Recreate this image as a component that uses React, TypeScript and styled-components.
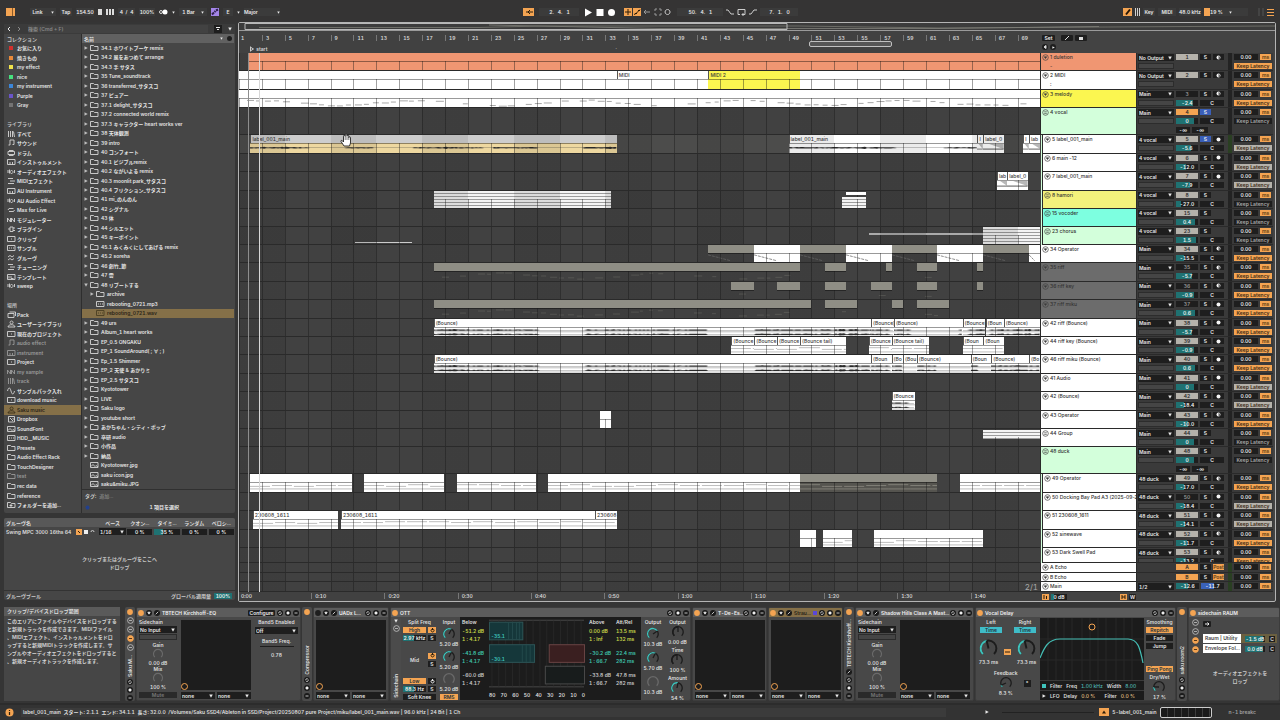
import React from "react";
import styled, { createGlobalStyle, css } from "styled-components";

const SPAN = 69.96;
const bar = (n: number) => (n * 100) / SPAN;

const ORANGE = "#f4a452";
const TEAL = "#1f7272";

const Global = createGlobalStyle`
  *, *::before, *::after { box-sizing: border-box; }
  html, body { margin: 0; padding: 0; background: #343434; }
  body, button, input, select {
    font-family: Inter, "Noto Sans CJK JP", sans-serif;
    font-size: 5px;
    font-weight: 600;
    line-height: 6px;
    font-variant-numeric: tabular-nums;
    color: #dedede;
  }
  button, input, select { margin: 0; padding: 0; border: 0; border-radius: 0; background: none; min-width: 0; outline: none; }
  input { text-align: center; width: 100%; }
  ul { list-style: none; margin: 0; padding: 0; }
  svg { display: block; flex: none; }
`;

const Shell = styled.div`
  height: 100vh;
  display: flex;
  flex-direction: column;
  overflow: hidden;
  background: #353535;
  white-space: nowrap;
`;

/* ---------- shared ---------- */

const Tri = ({ dir = "down", size = 4, color = "#e8e8e8" }: { dir?: "down" | "right"; size?: number; color?: string }) => (
  <svg width={size} height={size} viewBox="0 0 8 8" fill={color}>
    <path d={dir === "down" ? "M0.5 1h7L4 7.5z" : "M1 0.5v7L7.5 4z"} />
  </svg>
);

const PickWrap = styled.label<{ $w?: number }>`
  display: flex;
  align-items: center;
  height: 7px;
  width: ${(p) => (p.$w ? p.$w + "px" : "100%")};
  padding: 0 2px 0 1px;
  background: #1e1e1e;
  select { flex: 1; height: 7px; appearance: none; color: #e6e6e6; }
`;

const Pick = ({ value, label, w }: { value: string; label: string; w?: number }) => (
  <PickWrap $w={w}>
    <select aria-label={label} defaultValue={value}>
      <option>{value}</option>
    </select>
    <Tri />
  </PickWrap>
);

const Spacer = styled.div`
  flex: 1;
`;
const Narrow = styled.div<{ $w: number }>`
  flex: none;
  width: ${(p) => p.$w}px;
`;

/* ---------- top bar ---------- */

const TopBar = styled.header`
  flex: none;
  height: 22px;
  display: flex;
  align-items: center;
  padding: 2px 6px 0 6px;
  background: #353434;
`;
const Stretch = styled.div<{ $n: number }>`
  flex: ${(p) => p.$n} 1 0;
`;
const Group = styled.div<{ $gap?: number }>`
  display: flex;
  align-items: center;
  gap: ${(p) => p.$gap ?? 4}px;
`;
const Cell = styled.div<{ $w?: number; $gap?: number }>`
  height: 8px;
  line-height: 8px;
  width: ${(p) => (p.$w ? p.$w + "px" : "auto")};
  display: flex;
  align-items: center;
  justify-content: center;
  gap: ${(p) => p.$gap ?? 6}px;
  background: #3b3b3b;
  color: #e8e8e8;
`;
const Chip = styled.button<{ $bg?: string; $w?: number; $h?: number }>`
  flex: none;
  height: ${(p) => p.$h ?? 8}px;
  width: ${(p) => p.$w ?? 9}px;
  display: flex;
  align-items: center;
  justify-content: center;
  background: ${(p) => p.$bg ?? "#3b3b3b"};
  color: #e8e8e8;
`;

const Stroke = ({ d, w = 8, h = 8, color = "#dcdcdc", fill = "none", sw = 1 }: { d: string; w?: number; h?: number; color?: string; fill?: string; sw?: number }) => (
  <svg width={w} height={h} viewBox={`0 0 ${w} ${h}`} fill={fill} stroke={color} strokeWidth={sw}>
    <path d={d} />
  </svg>
);

const Top = () => (
  <TopBar>
    <Group>
      <Chip $bg={ORANGE} aria-label="browser">
        <Stroke d="M5.500 0v8" color="#8a5a28" />
      </Chip>
      <Narrow $w={7} />
      <Cell $w={26} $gap={8}>
        Link
        <Tri size={3} />
      </Cell>
      <Chip $w={12}>Tap</Chip>
      <Cell $w={18}>154.50</Cell>
      <Stroke w={16} d="M1 1v6M3 1v6M9 1v6M12 1v6M15 1v6" sw={2} />
      <Cell $w={17}>4&nbsp; / &nbsp;4</Cell>
      <Cell $w={16}>100%</Cell>
      <svg width="9" height="6" viewBox="0 0 9 6">
        <circle cx="2" cy="3" r="1.500" fill="none" stroke="#ddd" />
        <circle cx="6" cy="3" r="2.500" fill="#fff" />
      </svg>
      <Tri size={3} />
      <Cell $w={28}>
        1 Bar <Tri size={3} />
      </Cell>
      <Chip $bg="#a385e8" $w={8} aria-label="scale">
        <Stroke d="M1 6.500l2-2M3.500 4l1-1M5 2.500l2-1" color="#30204f" sw={2} />
      </Chip>
      <Cell $w={10}>E</Cell>
      <Tri size={3} />
      <Cell $w={36}>
        Major <Spacer /> <Tri size={3} />
      </Cell>
    </Group>
    <Stretch $n={3} />
    <Group $gap={5}>
      <Chip $bg={ORANGE} $w={11} aria-label="follow">
        <Stroke w={8} d="M1 4h7M5 2L3 4l2 2" color="#2c1c08" />
      </Chip>
      <Cell $w={40}>2.&nbsp;&nbsp; 4.&nbsp;&nbsp; 1</Cell>
      <svg width="35" height="9" viewBox="3 0 35 9" fill="#fff">
        <path d="M4 0.500v8L11 4.500z" />
        <rect x="15.500" y="1" width="7" height="7" />
        <circle cx="30.500" cy="4.500" r="3.500" />
      </svg>
      <Group $gap={1}>
        <Chip $bg={ORANGE} $w={8} aria-label="overdub">
          <Stroke d="M4 1v6M1 4h6" color="#2c1c08" />
        </Chip>
        <Chip $bg={ORANGE} $w={8} aria-label="automation arm">
          <Stroke d="M1 6.500l2-1 3-3 1-1M2 5.500h2M5 2.500h2" color="#2c1c08" />
        </Chip>
        <Stroke w={10} d="M2 4h6M4 2L2 4l2 2" color="#999" />
        <Stroke w={9} d="M2 3V1h2M6 1h2v2M8 5v2H6M4 7H2V5" color="#999" />
        <Stroke w={9} d="M4.500 1.500a2.500 2.500 0 1 0 .1 0" color="#ccc" />
      </Group>
      <Group $gap={3}>
        <Cell $w={46}>50.&nbsp;&nbsp; 4.&nbsp;&nbsp; 1</Cell>
        <Stroke d="M0 2h2l3 4h3" color="#ccc" />
        <Stroke w={9} d="M3 6.500H1V1.500h7v5H5M6.500 5L5 6.500 6.500 8" color="#ccc" />
        <Stroke d="M0 6h2l3-4h3" color="#ccc" />
        <Cell $w={38}>7.&nbsp;&nbsp; 1.&nbsp;&nbsp; 0</Cell>
      </Group>
    </Group>
    <Stretch $n={4} />
    <Group $gap={3}>
      <Chip $bg={ORANGE} aria-label="draw mode">
        <Stroke d="M2 6.500l4-5" color="#241505" sw={2} />
      </Chip>
      <Stroke w={5} d="M.5 0v8M2.500 0v8M4.500 0v8" color="#d0d0d0" />
      <Cell $w={12}>Key</Cell>
      <Cell $w={18}>MIDI</Cell>
      <Cell $w={22}>48.0 kHz</Cell>
      <Group $gap={0}>
        <Chip as="span" $bg={ORANGE} $w={6} />
        <Cell $w={38}>
          19 % <Tri size={3} /> <Spacer />
        </Cell>
      </Group>
      <Narrow $w={4} />
      <Stroke w={6} d="M1 0v8M5 0v8" color="#555" />
      <Stroke w={7} d="M0 1.500h7M0 4.500h7M0 7.500h7" color={ORANGE} />
    </Group>
  </TopBar>
);

/* ---------- browser ---------- */

const Middle = styled.div`
  flex: 1;
  min-height: 0;
  display: flex;
  gap: 3px;
  padding-right: 4px;
`;
const LeftCol = styled.aside`
  flex: none;
  width: 235px;
  padding: 2px 0 2px 4px;
  display: flex;
  flex-direction: column;
  gap: 5px;
`;
const Panel = styled.section<{ $grow?: boolean }>`
  display: flex;
  flex-direction: column;
  min-height: 0;
  flex: ${(p) => (p.$grow ? "1" : "none")};
  background: #464646;
  border-radius: 2px;
  overflow: hidden;
`;
const SearchRow = styled.div`
  flex: none;
  height: 10px;
  display: flex;
  align-items: center;
  gap: 6px;
  padding: 0 3px 0 2px;
  background: #3b3b3b;
  input { flex: 1; height: 8px; text-align: left; background: #424242; }
  input::placeholder { color: #888; }
`;
const Split = styled.div`
  flex: 1;
  min-height: 0;
  display: flex;
`;
const Side = styled.ul`
  flex: none;
  width: 78px;
  padding-bottom: 3px;
  display: flex;
  flex-direction: column;
  border-right: 1px solid #2e2e2e;
`;
const SideItem = styled.li<{ $kind?: string }>`
  flex: 1;
  min-height: 0;
  display: flex;
  align-items: center;
  gap: 1px;
  padding-left: 3px;
  color: ${(p) => (p.$kind === "head" ? "#c4c4c4" : p.$kind === "dim" ? "#9a9a9a" : p.$kind === "sel" ? "#2a2416" : "#e4e4e4")};
  background: ${(p) => (p.$kind === "sel" ? "#857048" : "transparent")};
`;
const Swatch = styled.span<{ $c: string }>`
  width: 4px;
  height: 4px;
  margin: 0 3px 0 2px;
  background: ${(p) => p.$c};
`;

const G: Record<string, string> = {
  bars: "M1.500 1v6M3.500 1v6M5.500 1v6M6.500 1.500l1 5.500",
  note: "M3 6V1h4v4.500M1.500 6h1.500M5.500 5.500H7",
  drum: "M1 2.500h6.500v3H1zM2 1.500h4.500M2 6.500h4.500",
  keys: "M.5 1.500h7.500v5H.5zM3 4v2.500M5.500 4v2.500",
  fx: "M1 2v3M2.500 1.500v4M4.500 2.500a1.500 1.500 0 1 0 .1 0M7.500 2v3",
  midi: "M1 1.500h5M3 4h5M1 6.500h6",
  max: "M2 2.500h4.500M2 5.500h4.500M1 4l1-1.500M7.500 4L6.500 5.500",
  mod: "M.5 6V2l3 4V2M4.500 6V2l3 4V2",
  plug: "M3 2h3v4.500H3zM1 4h2M6 3h2M6 5.500h2",
  box: "M.5 1.500h7.500v5H.5zM4 4h1",
  smp: "M.5 1.500h7.500v5H.5zM2 4h1M4 4h1M6 4h1",
  waves: "M1 3l2-1.500 2 1.500 2-1.500M1 6l2-1.500L5 6l2-1.500",
  tmpl: "M.5 1.500h7.500v5H.5zM2 3v2.500M4 3v2.500h2.500",
  pack: "M1 2.500h6v4H1zM2.500 1h6v4",
  user: "M4.500 1a1.500 1.500 0 1 0 .1 0M1 7c0-3 7-3 7 0z",
  folder: "M.5 6.500v-5h3l1 1H8v4z",
  sine: "M.5 4c1-4 2.500-4 3.500 0s2.500 4 3.500 0",
  drop: "M1.500 1.500h6v5.500h-6zM3 3l3 3M5.500 3l2 2",
  img: "M.5 1.500h7.500v5H.5zM1 5.500l2-2 2 2 1-1 2 1.500",
  add: "M.5 6.500v-5h3l1 1H8v4zM4 3v3M2.500 4.500h3",
};
const Glyph = ({ n, color = "#d6d6d6" }: { n: string; color?: string }) => (
  <svg width="9" height="8" viewBox="0 0 9 8" fill="none" stroke={color} strokeWidth="0.9">
    <path d={G[n]} />
  </svg>
);

const collections: [string, string][] = [
  ["お気に入り", "#d3302c"],
  ["焼きもの", "#e98a3a"],
  ["my effect", "#f0e34a"],
  ["nice", "#46e07d"],
  ["my instrument", "#3c86d8"],
  ["Purple", "#6a55c8"],
  ["Gray", "#747474"],
];
const library: [string, string][] = [
  ["bars", "すべて"],
  ["note", "サウンド"],
  ["drum", "ドラム"],
  ["keys", "インストゥルメント"],
  ["fx", "オーディオエフェクト"],
  ["midi", "MIDIエフェクト"],
  ["keys", "AU Instrument"],
  ["fx", "AU Audio Effect"],
  ["max", "Max for Live"],
  ["mod", "モジュレーター"],
  ["plug", "プラグイン"],
  ["box", "クリップ"],
  ["smp", "サンプル"],
  ["waves", "グルーヴ"],
  ["midi", "チューニング"],
  ["tmpl", "テンプレート"],
  ["fx", "sweep"],
];
const places: [string, string, string?][] = [
  ["pack", "Pack"],
  ["user", "ユーザーライブラリ"],
  ["box", "現在のプロジェクト"],
  ["note", "audio effect", "dim"],
  ["keys", "instrument", "dim"],
  ["box", "Project"],
  ["mod", "my sample", "dim"],
  ["bars", "track", "dim"],
  ["sine", "サンプルパック入れ"],
  ["box", "download music"],
  ["user", "Saku music", "sel"],
  ["drop", "Dropbox"],
  ["img", "SoundFont"],
  ["smp", "HDD__MUSIC"],
  ["folder", "Presets"],
  ["folder", "Audio Effect Rack"],
  ["folder", "TouchDesigner"],
  ["folder", "test", "dim"],
  ["folder", "rec data"],
  ["folder", "reference"],
  ["add", "フォルダーを追加..."],
];

const FileCol = styled.div`
  flex: 1;
  min-width: 0;
  display: flex;
  flex-direction: column;
`;
const FileHead = styled.div`
  flex: none;
  height: 9px;
  display: flex;
  align-items: center;
  gap: 4px;
  padding: 0 2px;
  margin-right: 1px;
  background: #616161;
  font-weight: 700;
`;
const Files = styled.ul`
  flex: 1;
  min-height: 0;
  display: flex;
  flex-direction: column;
`;
const FileItem = styled.li<{ $deep?: boolean; $sel?: boolean }>`
  flex: 1;
  min-height: 0;
  display: flex;
  align-items: center;
  gap: 2px;
  margin-right: 1px;
  padding-left: ${(p) => (p.$deep ? 8 : 2)}px;
  color: ${(p) => (p.$sel ? "#2a2416" : "#e4e4e4")};
  background: ${(p) => (p.$sel ? "#857048" : "transparent")};
`;
const TagRow = styled.div`
  flex: none;
  height: 12px;
  display: flex;
  align-items: center;
  gap: 3px;
  padding-left: 3px;
  border-top: 1px solid #303030;
  color: #c8c8c8;
  em { font-style: normal; color: #7e7e7e; }
`;
const CountRow = styled(TagRow)`
  border: 0;
  padding: 0 56px 0 3px;
  justify-content: space-between;
  color: #e4e4e4;
`;

const folders1 =
  "34.1 ホワイトブーケ remix|34.2 風をあつめて arrange|34.3 手 サタス|35 Tune_soundtrack|36 transferred_サタスコ|37 ピュアー|37.1 delight_サタスコ|37.2 connected world remix|37.3 キャラクター heart works ver|38 天体観測|39 intro|40 コンフォート|40.1 ビジブルremix|40.2 ながいよる remix|40.3 moonlit park_サタスコ|40.4 フリクション_サタスコ|41 mi_のんのん|42 シグナル|43 体|44 シルエット|45 キーポイント|45.1 みくみくにしてあげる remix|45.2 soreha|46 創竹_節|47 雲".split("|");
const folders2 =
  "49 urs|Album_1 heart works|EP_0.5 ONGAKU|EP_1 SoundAround( ; ∀ ; )|Ep_1.5 Shimmer|EP_2 天使 & あかりミ|EP_2.5 サタスコ|Kyototower|LIVE|Saku logo|youtube short|あかちゃん・シティ・ポップ|卒研 audio|小作品|納品".split("|");

const Folder = ({ name, open, deep }: { name: string; open?: boolean; deep?: boolean }) => (
  <FileItem $deep={deep}>
    <Tri dir={open ? "down" : "right"} size={4} color="#bdbdbd" />
    <Glyph n="folder" />
    {name}
  </FileItem>
);
const Doc = ({ name, icon, deep, sel }: { name: string; icon: string; deep?: boolean; sel?: boolean }) => (
  <FileItem $deep={deep} $sel={sel}>
    <Narrow $w={4} />
    <Glyph n={icon} color={sel ? "#4a3e22" : undefined} />
    {name}
  </FileItem>
);

const Browser = () => (
  <Panel $grow>
    <SearchRow>
      <Stroke w={5} h={6} d="M4 1L2 3l2 2" color="#e8e8e8" />
      <Stroke w={5} h={6} d="M1 1l2 2-2 2" color="#8a8a8a" />
      <input aria-label="search" placeholder="検索 (Cmd + F)" />
      <Chip $bg="#1e1e1e" $w={8} aria-label="filter">
        <Stroke w={6} h={6} d="M1 1.500h4M2 3.500h2" color="#eee" />
      </Chip>
      <Tri />
    </SearchRow>
    <Split>
      <Side>
        <SideItem $kind="head">コレクション</SideItem>
        {collections.map(([t, c]) => (
          <SideItem key={t}>
            <Swatch $c={c} />
            {t}
          </SideItem>
        ))}
        <SideItem />
        <SideItem $kind="head">ライブラリ</SideItem>
        {library.map(([i, t]) => (
          <SideItem key={t}>
            <Glyph n={i} />
            {t}
          </SideItem>
        ))}
        <SideItem />
        <SideItem $kind="head">場所</SideItem>
        {places.map(([i, t, k]) => (
          <SideItem key={t} $kind={k}>
            <Glyph n={i} color={k === "dim" ? "#9a9a9a" : k === "sel" ? "#3a3018" : undefined} />
            {t}
          </SideItem>
        ))}
      </Side>
      <FileCol>
        <FileHead>
          名前 <Spacer />
          <Tri size={3} />
          <svg width="5" height="5" viewBox="0 0 5 5">
            <circle cx="2.500" cy="2.500" r="2.500" fill="#1e1e1e" />
          </svg>
        </FileHead>
        <Files>
          {folders1.map((f) => (
            <Folder key={f} name={f} />
          ))}
          <Folder name="48 リブートする" open />
          <Folder name="archive" deep />
          <Doc name="rebooting_0721.mp3" icon="smp" deep />
          <Doc name="rebooting_0721.wav" icon="smp" deep sel />
          {folders2.map((f) => (
            <Folder key={f} name={f} />
          ))}
          <Doc name="Kyototower.jpg" icon="img" />
          <Doc name="saku icon.jpg" icon="img" />
          <Doc name="saku&miku.JPG" icon="img" />
        </Files>
        <TagRow>
          タグ: <em>追加...</em>
        </TagRow>
        <CountRow>
          <svg width="5" height="5" viewBox="0 0 5 5">
            <circle cx="2.500" cy="2.500" r="2" fill="#22408c" />
          </svg>
          1 項目を選択
        </CountRow>
      </FileCol>
    </Split>
  </Panel>
);

/* ---------- groove pool ---------- */

const GrooveTable = styled.table`
  width: 100%;
  border-collapse: collapse;
  table-layout: fixed;
  th, td { height: 9px; padding: 0; text-align: center; font-weight: 600; }
  th:first-child, td:first-child { text-align: left; padding-left: 2px; width: 95px; overflow: hidden; }
  thead { background: #585858; }
`;
const GrooveName = styled.div`
  display: flex;
  align-items: center;
  gap: 2px;
`;
const Field = styled.input<{ $fill?: number; $c?: string; $bg?: string }>`
  display: block;
  height: 6px;
  color: #f2f2f2;
  background: ${(p) => `linear-gradient(90deg, ${p.$c ?? TEAL} ${p.$fill ?? 0}%, ${p.$bg ?? "#1e1e1e"} ${p.$fill ?? 0}%)`};
`;
const Inset = styled.div`
  padding: 0 1px;
`;
const Hint = styled.div`
  flex: 1;
  display: flex;
  align-items: center;
  justify-content: center;
  text-align: center;
  line-height: 8px;
  color: #c9c9c9;
`;
const Foot = styled.div`
  flex: none;
  height: 10px;
  display: flex;
  align-items: center;
  gap: 3px;
  padding: 0 3px 0 2px;
  border-top: 1px solid #333;
  color: #c9c9c9;
`;
const GroovePanel = styled(Panel)`
  height: 82px;
`;

const Groove = () => (
  <GroovePanel>
    <GrooveTable>
      <thead>
        <tr>
          {["グルーヴ名", "ベース", "クオン...", "タイミ...", "ランダム", "ベロシ..."].map((h) => (
            <th key={h}>{h}</th>
          ))}
        </tr>
      </thead>
      <tbody>
        <tr>
          <td>
            <GrooveName>
              Swing MPC 3000 16ths 64 <Spacer />
              <Chip $bg={ORANGE} $w={6} $h={6} aria-label="commit">
                <Stroke w={4} h={4} d="M1 1l2 2" color="#2c1c08" />
              </Chip>
              <Stroke w={4} h={4} d="M0 2h4" sw={4} color="#eee" />
              <Stroke w={5} h={5} d="M1 3a1.500 1.500 0 1 1 3 0" color="#ccc" />
              <Narrow $w={2} />
            </GrooveName>
          </td>
          <td>
            <Pick value="1/16" label="base" />
          </td>
          {[
            ["0 %", 0],
            ["35 %", 35],
            ["0 %", 0],
            ["0 %", 0],
          ].map(([v, f], i) => (
            <td key={i}>
              <Inset>
                <Field aria-label="amount" defaultValue={v} $fill={f as number} />
              </Inset>
            </td>
          ))}
        </tr>
      </tbody>
    </GrooveTable>
    <Hint>
      クリップまたはグルーヴをここへ
      <br />
      ドロップ
    </Hint>
    <Foot>
      グルーヴプール <Spacer />
      グローバル適用量
      <Narrow $w={18}>
        <Field aria-label="global amount" defaultValue="100%" $fill={100} />
      </Narrow>
    </Foot>
  </GroovePanel>
);

/* ---------- arrangement ---------- */

const Arr = styled.main`
  flex: 1;
  min-width: 0;
  display: flex;
  flex-direction: column;
  border: 1px solid #b4b4b4;
  border-radius: 2px;
  background: #434343;
  position: relative;
`;
const Overview = styled.div`
  flex: none;
  height: 8px;
  border-bottom: 1px solid #9a9a9a;
  background: #3c3c3c;
  svg { width: 100%; height: 7px; }
`;
const RulerRow = styled.div`
  flex: none;
  height: 22px;
  display: flex;
`;
const Ruler = styled.div`
  flex: 1;
  min-width: 0;
  position: relative;
  overflow: hidden;
  background: #414141;
`;
const Mark = styled.span<{ $at: number; $y: number; $tick?: boolean }>`
  position: absolute;
  left: ${(p) => bar(p.$at - 1)}%;
  top: ${(p) => p.$y}px;
  display: flex;
  align-items: center;
  gap: 2px;
  padding-left: ${(p) => (p.$tick ? 3 : 1)}px;
  border-left: 1px solid ${(p) => (p.$tick ? "#777" : "transparent")};
  color: #d8d8d8;
`;
const LoopBrace = styled.span`
  position: absolute;
  left: ${bar(49.8)}%;
  width: ${bar(7.2)}%;
  top: 10px;
  height: 6px;
  border: 1px solid #c0c0c0;
  background: #555;
  border-radius: 2px;
`;
const RightCol = styled.div`
  flex: none;
  width: 235px;
  display: flex;
`;
const SetTools = styled.div`
  display: flex;
  flex-direction: column;
  gap: 3px;
  padding: 4px 0 0 2px;
`;
const DarkButton = styled.button<{ $w: number; $round?: boolean }>`
  flex: none;
  height: 6px;
  width: ${(p) => p.$w}px;
  display: flex;
  align-items: center;
  justify-content: center;
  background: #1e1e1e;
  border-radius: ${(p) => (p.$round ? "3px" : "1px")};
  color: #eee;
`;

const Tracks = styled.div`
  flex: 1;
  min-height: 0;
  display: flex;
  flex-direction: column;
  position: relative;
  padding-right: 2px;
`;
const Row = styled.div<{ $weight: number }>`
  flex: ${(p) => p.$weight} 1 0;
  min-height: 0;
  display: flex;
  overflow: hidden;
`;
const gridLines = `repeating-linear-gradient(90deg, rgba(20,20,20,.4) 0 1px, transparent 1px ${bar(2)}%)`;
const stripes = (a: number) => `repeating-linear-gradient(90deg, rgba(0,0,0,${a}) 0 ${bar(4)}%, transparent ${bar(4)}% ${bar(8)}%)`;

const Lane = styled.div<{ $sel?: boolean; $shade?: number }>`
  flex: 1;
  min-width: 0;
  position: relative;
  overflow: hidden;
  border-bottom: 1px solid #2a2a2a;
  background: ${gridLines} 0 0 / 100% 8px no-repeat, ${(p) => (p.$sel ? "#4c4c4b" : "#414141")};
  &::after {
    content: "";
    position: absolute;
    inset: 8px 0 0 0;
    background: ${gridLines};
    pointer-events: none;
  }
  &::before {
    content: "";
    position: absolute;
    inset: 0;
    z-index: ${(p) => (p.$shade ? 1 : 0)};
    background: ${(p) => stripes(p.$shade ?? 0.06)};
    pointer-events: none;
  }
`;
const ClipBox = styled.div<{ $from: number; $to: number; $top?: number; $h?: number }>`
  position: absolute;
  left: ${(p) => bar(p.$from - 1)}%;
  width: ${(p) => bar(p.$to - p.$from)}%;
  top: ${(p) => p.$top ?? 0}px;
  ${(p) => (p.$h ? css`height: ${p.$h}px;` : css`bottom: 0;`)}
  display: flex;
  flex-direction: column;
  overflow: hidden;
`;
const ClipHead = styled.div<{ $c: string; $edge?: boolean }>`
  flex: none;
  height: 8px;
  padding-left: 1px;
  line-height: 8px;
  overflow: hidden;
  font-weight: 500;
  color: #3a3a3a;
  background: ${(p) => p.$c};
  border-left: 1px solid ${(p) => (p.$edge ? "#555" : "transparent")};
`;
const ClipBody = styled.div<{ $c: string }>`
  flex: 1;
  min-height: 0;
  background: ${(p) => p.$c};
  border-top: 1px solid rgba(0, 0, 0, 0.4);
  svg { width: 100%; height: 100%; }
`;
const StripeFill = styled.div`
  flex: 1;
  background: repeating-linear-gradient(180deg, #f4f4f4 0 2px, #9c9c9c 2px 3px);
`;
const Fill = styled.div<{ $c: string }>`
  flex: 1;
  background: ${(p) => p.$c};
`;

type Kind = "wave" | "stereo" | "notes" | "lines" | "diag" | "fade" | "plain" | "stripes" | "solid" | "mutedLines" | "scrawl";
type ClipT = { a: number; b: number; t?: string; k?: Kind; c?: string; body?: string; top?: number; h?: number };

const rnd = (i: number) => {
  const v = Math.sin(i * 12.9898 + 4.1) * 43758.5453;
  return v - Math.floor(v);
};

const Content = ({ k, len, seed }: { k: Kind; len: number; seed: number }) => {
  const W = Math.max(10, Math.round(len * 11.45));
  const shapes: React.ReactNode[] = [];
  if (k === "wave" || k === "stereo") {
    const mids = k === "wave" ? [4.5] : [2.5, 7.5];
    mids.forEach((m, j) => {
      let d = `M0 ${m}`;
      const back: string[] = [];
      for (let x = 0; x <= W; x += 2) {
        const swell = Math.sin((x + seed * 37) / 13) + Math.sin((x + seed * 11) / 29);
        const r = swell > -0.4 ? 0.4 + rnd(x + seed) * (swell > 1.3 ? 0.9 : 0.5) : 0.1;
        d += `L${x} ${(m - r).toFixed(2)}`;
        back.unshift(`L${x} ${(m + r).toFixed(2)}`);
      }
      shapes.push(<path key={j} d={d + back.join("") + "z"} fill="#2a2a2a" />);
      if (k === "stereo") shapes.push(<path key={"l" + j} d={`M0 ${m + 2}H${W}`} stroke="#888" strokeWidth="0.6" />);
    });
  }
  if (k === "notes" || k === "scrawl") {
    let d = "";
    for (let x = 8; x < W - 8; x += 9) {
      if (rnd(x + seed) < 0.28) continue;
      const y = 4 - 3 * Math.sin(x / 26 + seed) + rnd(x * 3) * 1.5;
      d += `M${x} ${y.toFixed(1)}h${3 + Math.round(rnd(x + 1) * 5)}`;
    }
    shapes.push(<path key="n" d={d} stroke={k === "notes" ? "#888" : "#8a8a80"} strokeWidth="0.8" fill="none" opacity={k === "notes" ? 1 : 0.4} />);
  }
  if (k === "lines" || k === "mutedLines") {
    let d = "";
    for (let x = 0; x < W; x += 22) d += `M${x} ${2 + Math.round(rnd(x + seed) * 2)}h20M${x} 7h22`;
    shapes.push(<path key="h" d={d} stroke={k === "lines" ? "#999" : "#99968c"} strokeWidth="0.7" fill="none" />);
  }
  if (k === "diag") shapes.push(<path key="d" d={`M0 1L${W * 0.5} 8`} stroke="#666" strokeWidth="0.8" strokeDasharray="3 1" fill="none" />);
  if (k === "fade")
    shapes.push(<path key="f" d={`M${W * 0.3} 0H${W}V6z`} fill="#b8b8b8" />, <path key="g" d={`M0 6h${W}`} stroke="#444" strokeWidth="1" />);
  return (
    <svg viewBox={`0 0 ${W} 10`} preserveAspectRatio="none">
      {shapes}
    </svg>
  );
};

const Clip = ({ c }: { c: ClipT }) => {
  const k = c.k ?? "plain";
  const color = c.c ?? "#fff";
  const framed = k !== "stripes" && k !== "solid";
  return (
    <ClipBox $from={c.a} $to={c.b} $top={c.top} $h={c.h}>
      {k === "stripes" && <StripeFill />}
      {k === "solid" && <Fill $c={color} />}
      {framed && (
        <ClipHead $c={color} $edge={!!c.t}>
          {c.t}
        </ClipHead>
      )}
      {framed && (
        <ClipBody $c={c.body ?? (k === "scrawl" ? "transparent" : color)}>
          <Content k={k} len={c.b - c.a} seed={Math.round(c.a)} />
        </ClipBody>
      )}
    </ClipBox>
  );
};

const MUTED = "#8f8e85";
const bounce = (k: Kind, xs: number[], labels: string[]): ClipT[] => labels.map((t, i) => ({ a: xs[i], b: xs[i + 1], t, k }));
const muted = (pairs: number[][]): ClipT[] => pairs.map(([a, b]) => ({ a, b, k: "scrawl" as Kind, c: MUTED }));

type Track = {
  n: string;
  c?: string;
  out: string;
  num: string;
  state?: "off" | "hot";
  solo?: boolean;
  rec?: "dot" | "half";
  vol?: string;
  fill?: number;
  keep: "orange" | "gray" | "dark";
  child?: boolean;
  group?: boolean;
  big?: boolean;
  w?: number;
  clips?: ClipT[];
  sel?: boolean;
  shade?: number;
  sub?: string;
};

const GREEN = "#d3ffdb";
const tracks: Track[] = [
  { n: "1 duletion", c: "#f09672", out: "No Output", num: "1", rec: "half", keep: "orange", sub: "-", clips: [{ a: 1.8, b: 71, c: "#f09672" }] },
  {
    n: "2 MIDI", out: "No Output", num: "2", rec: "half", keep: "orange", sub: ":",
    clips: [{ a: 1, b: 34 }, { a: 34, b: 42, t: "MIDI" }, { a: 42, b: 50, t: "MIDI 2", c: "#fbf650" }, { a: 50, b: 71 }],
  },
  { n: "3 melody", c: "#fbf650", out: "Main", num: "3", state: "off", rec: "half", vol: "-2.4", fill: 78, keep: "orange", clips: [{ a: 1, b: 71, k: "notes" }] },
  { n: "4 vocal", c: GREEN, out: "Main", num: "4", state: "hot", solo: true, vol: "0", fill: 84, keep: "dark", group: true, big: true, w: 54 },
  {
    n: "5 label_001_main", out: "4 vocal", num: "5", solo: true, rec: "dot", vol: "-5.6", fill: 70, keep: "gray", child: true, sel: true, shade: 0.08,
    clips: [
      { a: 2, b: 34, t: "label_001_main", k: "wave", c: "#cdcdcd", body: "#eed8a0" },
      { a: 49, b: 65.5, t: "label_001_main", k: "wave" },
      { a: 65.5, b: 66, t: "l", k: "fade" },
      { a: 66, b: 67.8, t: "label_0", k: "fade" },
      { a: 69.5, b: 70, t: "l", k: "fade" },
      { a: 70, b: 71, t: "lab", k: "fade" },
    ],
  },
  { n: "6 main -12", out: "4 vocal", num: "6", rec: "dot", vol: "-12.0", fill: 45, keep: "gray", child: true },
  {
    n: "7 label_001_main", out: "4 vocal", num: "7", rec: "dot", vol: "-7.9", fill: 62, keep: "gray", child: true,
    clips: [{ a: 67.2, b: 68.1, t: "lab", k: "fade" }, { a: 68.1, b: 69.9, t: "label_0", k: "fade" }],
  },
  {
    n: "8 hamori", c: "#f4f17c", out: "4 vocal", num: "8", vol: "-27.0", fill: 25, keep: "dark", child: true, group: true, w: 36, shade: 0.1,
    clips: [{ a: 18, b: 33.5, k: "stripes" }, { a: 54, b: 55.8, top: 1, h: 3, k: "solid" }, { a: 53.7, b: 55.8, top: 6, k: "stripes" }],
  },
  { n: "15 vocoder", c: "#7dffe0", out: "4 vocal", num: "15", vol: "0.4", fill: 86, keep: "dark", child: true, group: true, w: 36 },
  {
    n: "23 chorus", c: GREEN, out: "4 vocal", num: "23", vol: "1.5", fill: 90, keep: "dark", child: true, group: true, w: 36, shade: 0.1,
    clips: [{ a: 11.1, b: 16.1, top: 15, h: 1, k: "solid", c: "#ccc" }, { a: 56, b: 66, top: 6, h: 2, k: "solid", c: "#aaa" }, { a: 66, b: 71, k: "stripes" }],
  },
  {
    n: "34 Operator", out: "Main", num: "34", rec: "half", vol: "-15.5", fill: 35, keep: "orange",
    clips: [
      { a: 42, b: 46, c: MUTED, body: "transparent", k: "diag" }, { a: 46, b: 50, k: "diag" },
      { a: 50, b: 54, c: MUTED, body: "transparent", k: "diag" }, { a: 54, b: 58, k: "diag" },
      { a: 58, b: 62, c: MUTED, body: "transparent", k: "diag" }, { a: 62, b: 66, k: "diag" },
      { a: 66, b: 70, c: MUTED, body: "transparent", k: "diag" }, { a: 70, b: 71, k: "diag" },
    ],
  },
  { n: "35 riff", c: "#6c6c6c", out: "Main", num: "35", state: "off", rec: "half", vol: "-5.7", fill: 72, keep: "orange", clips: muted([[18, 50], [52.2, 54], [57.5, 58], [60.2, 62], [65.5, 66]]) },
  { n: "36 riff key", c: "#6c6c6c", out: "Main", num: "36", state: "off", rec: "half", vol: "-0.9", fill: 80, keep: "orange", clips: muted([[44, 46], [48, 50], [52.2, 54], [56.2, 58], [60.2, 62], [65.5, 66]]) },
  { n: "37 riff miku", c: "#6c6c6c", out: "Main", num: "37", state: "off", rec: "dot", vol: "0.6", fill: 86, keep: "orange", clips: muted([[18, 51], [52.2, 55], [58, 59], [60.2, 63]]) },
  {
    n: "42 riff (Bounce)", out: "Main", num: "38", rec: "dot", vol: "-5.7", fill: 72, keep: "orange",
    clips: bounce("stereo", [18, 55.9, 56.2, 58.2, 64.2, 66.2, 67.8, 71], ["(Bounce)", "", "(Bounce)", "(Bounce)", "(Bounce)", "(Boun", "(Bounce)"]),
  },
  {
    n: "44 riff key (Bounce)", out: "Main", num: "39", rec: "dot", vol: "-0.9", fill: 80, keep: "orange",
    clips: [
      ...bounce("lines", [44, 46, 48, 50, 54], ["(Bounce", "(Bounce", "(Bounce", "(Bounce tail)"]),
      ...bounce("lines", [56, 58, 61.3], ["(Bounce", "(Bounce tail)"]),
      ...bounce("lines", [64.2, 66, 67.8], ["(Boun", "(Boun"]),
    ],
  },
  {
    n: "46 riff miku (Bounce)", out: "Main", num: "40", rec: "dot", vol: "0.6", fill: 86, keep: "orange",
    clips: bounce("stereo", [18, 56.2, 58, 59, 60.2, 64.9, 66.7, 70, 71], ["(Bounce)", "(Boun", "(Bo", "(Bou", "(Bounce)", "(Boun", "(Bounce)", "(Bo"]),
  },
  { n: "41 Audio", out: "Main", num: "41", rec: "dot", vol: "0", fill: 84, keep: "gray" },
  { n: "42 (Bounce)", out: "Main", num: "42", rec: "dot", vol: "-18.4", fill: 35, keep: "gray", clips: [{ a: 58, b: 60, t: "(Bounce", k: "stereo" }] },
  { n: "43 Operator", out: "Main", num: "43", rec: "half", vol: "-10.0", fill: 55, keep: "orange", clips: [{ a: 32.5, b: 33.5 }] },
  { n: "44 Group", out: "Main", num: "44", vol: "0", fill: 84, keep: "dark", group: true, w: 36, clips: [{ a: 66, b: 71, top: 1, h: 9, k: "stripes" }] },
  { n: "48 duck", c: GREEN, out: "Main", num: "48", vol: "0", fill: 84, keep: "dark", group: true, big: true, w: 54 },
  {
    n: "49 Operator", out: "48 duck", num: "49", rec: "half", vol: "-17.0", fill: 35, keep: "orange", child: true,
    clips: [
      { a: 2, b: 10.9, k: "lines" }, { a: 11.9, b: 18.9, k: "lines" }, { a: 20, b: 26.9, k: "lines" }, { a: 28, b: 50, k: "lines" },
      { a: 50, b: 62, k: "mutedLines", c: MUTED, body: "#55544f" }, { a: 64, b: 71, k: "lines" },
    ],
  },
  { n: "50 Docking Bay Pad A3 (2025-09-2", out: "48 duck", num: "50", state: "off", rec: "dot", vol: "-18.4", fill: 35, keep: "gray", child: true },
  {
    n: "51 230608_1611", out: "48 duck", num: "51", rec: "dot", vol: "-14.1", fill: 42, keep: "gray", child: true,
    clips: [{ a: 2.2, b: 9.65, t: "230608_1611", k: "lines" }, { a: 9.9, b: 32.1, t: "230608_1611", k: "lines" }, { a: 32.1, b: 34, t: "230608", k: "lines" }],
  },
  {
    n: "52 sinewave", out: "48 duck", num: "52", rec: "half", vol: "-11.7", fill: 50, keep: "orange", child: true,
    clips: [{ a: 50, b: 51.4 }, { a: 52, b: 54.5, k: "lines" }, { a: 56.5, b: 66, k: "lines" }],
  },
  { n: "53 Dark Swell Pad", out: "48 duck", num: "53", rec: "half", vol: "-13.2", fill: 45, keep: "orange", child: true, w: 30 },
];

const Header = styled.div<{ $c: string; $child?: boolean }>`
  flex: none;
  width: 97px;
  padding: 1px 0 0 1px;
  display: flex;
  align-items: flex-start;
  gap: 1px;
  overflow: hidden;
  color: #333;
  font-weight: 500;
  font-variant-numeric: normal;
  background: ${(p) => p.$c};
  border: solid #2a2a2a;
  border-width: 0 1px 1px 1px;
  ${(p) => p.$child && css`box-shadow: -1px 0 0 ${GREEN}; margin-left: 2px; width: 95px;`}
`;
const HeadText = styled.div`
  display: flex;
  flex-direction: column;
  line-height: 7px;
  gap: 2px;
`;
const Stack = styled.div<{ $w: number }>`
  flex: none;
  width: ${(p) => p.$w}px;
  padding: 1px 1px 0 1px;
  display: flex;
  flex-direction: column;
  gap: 2px;
  overflow: hidden;
  background: #3a3a3a;
  border-bottom: 1px solid #2a2a2a;
`;
const Slot = styled.div`
  flex: none;
  height: 6px;
  background: #454545;
  border: 1px solid #2c2c2c;
`;
const Line = styled.div`
  flex: none;
  height: 7px;
  display: flex;
  gap: 2px;
`;
const Activator = styled.button<{ $s?: string }>`
  width: 22px;
  height: 6px;
  background: ${(p) => (p.$s === "off" ? "#1e1e1e" : p.$s === "hot" ? ORANGE : "#b5b2ab")};
  color: ${(p) => (p.$s === "off" ? "#9a9a9a" : "#2c2c2c")};
`;
const Sq = styled.button<{ $on?: boolean }>`
  width: 11px;
  height: 6px;
  display: flex;
  align-items: center;
  justify-content: center;
  background: ${(p) => (p.$on ? "#3a5fb8" : "#1e1e1e")};
  color: #eee;
`;
const Meter = styled.span<{ $live?: boolean }>`
  flex: none;
  width: 4px;
  background: ${(p) => (p.$live ? "#2a3f22" : "#232323")};
`;
const MixRow = styled.div`
  flex: none;
  width: 58px;
  display: flex;
  background: #3a3a3a;
  border-bottom: 1px solid #2a2a2a;
  ${Stack} { border: 0; }
`;
const Ms = styled.button`
  width: 11px;
  height: 6px;
  background: ${ORANGE};
  color: #5b3a12;
`;
const Keep = styled.button<{ $k: string }>`
  height: 6px;
  width: 100%;
  line-height: 6px;
  background: ${(p) => (p.$k === "orange" ? ORANGE : p.$k === "gray" ? "#b5b2ab" : "#1e1e1e")};
  color: ${(p) => (p.$k === "dark" ? "#a8a8a8" : "#3b2a14")};
`;

const FoldIcon = ({ dot }: { dot?: boolean }) => (
  <svg width="7" height="7" viewBox="0 0 7 7" fill="none" stroke="#444" strokeWidth="0.7">
    <circle cx="3.500" cy="3.500" r="2.800" />
    {dot ? <path d="M2.200 2.800h2.600M2.200 4.400h2.600" /> : <path d="M2.300 2.800h2.400L3.500 4.600z" fill="#333" />}
  </svg>
);
const RecIcon = ({ half }: { half?: boolean }) => (
  <svg width="5" height="5" viewBox="0 0 5 5">
    <circle cx="2.500" cy="2.500" r="2" fill="#f5f5f5" />
    {half && <path d="M2.500 .5v4a2 2 0 0 0 2-2z" fill="#666" />}
  </svg>
);

const TrackRow = ({ t }: { t: Track }) => (
  <Row $weight={t.w ?? 37}>
    <Lane $sel={t.sel} $shade={t.shade}>
      {t.clips?.map((c, i) => (
        <Clip key={i} c={c} />
      ))}
    </Lane>
    <Header $c={t.c ?? "#fff"} $child={t.child}>
      <FoldIcon dot={t.group} />
      <HeadText>
        <span>{t.n}</span>
        {t.sub && <span>{t.sub}</span>}
      </HeadText>
    </Header>
    <Stack $w={38}>
      <Pick value={t.out} label="output" />
      <Slot />
    </Stack>
    <MixRow>
      <Stack $w={53}>
        <Line>
          <Activator $s={t.state}>{t.num}</Activator>
          <Sq $on={t.solo}>S</Sq>
          {t.rec && (
            <Sq aria-label="arm">
              <RecIcon half={t.rec === "half"} />
            </Sq>
          )}
        </Line>
        {t.vol && (
          <Line>
            <Narrow $w={22}>
              <Field aria-label="volume" defaultValue={t.vol} $fill={t.fill} />
            </Narrow>
            <Narrow $w={24}>
              <Field aria-label="pan" defaultValue="C" />
            </Narrow>
          </Line>
        )}
        {t.big && (
          <Line>
            <Narrow $w={14}>
              <Field aria-label="send a" defaultValue="-∞" />
            </Narrow>
            <Narrow $w={16}>
              <Field aria-label="send b" defaultValue="-∞" />
            </Narrow>
          </Line>
        )}
      </Stack>
      <Meter $live={t.sel} />
    </MixRow>
    <Stack $w={40}>
      <Line>
        <Narrow $w={24}>
          <Field aria-label="track delay" defaultValue="0.00" />
        </Narrow>
        <Ms>ms</Ms>
      </Line>
      <Keep $k={t.keep}>Keep Latency</Keep>
    </Stack>
  </Row>
);

const Returns = styled.div`
  flex: none;
  height: 29px;
  display: flex;
  flex-direction: column;
`;
const Overlay = styled.div`
  position: absolute;
  inset: 0 235px 0 0;
  pointer-events: none;
  z-index: 2;
`;
const VLine = styled.span<{ $at: number; $c: string }>`
  position: absolute;
  top: 0;
  bottom: 0;
  left: ${(p) => bar(p.$at - 1)}%;
  width: 1px;
  background: ${(p) => p.$c};
`;
const Hand = styled.svg`
  position: absolute;
  left: ${bar(8.8)}%;
  top: 80px;
`;
const GridNote = styled.span`
  position: absolute;
  right: 2px;
  bottom: 0;
  font-size: 8px;
  line-height: 8px;
  font-weight: 400;
  color: #aaa;
`;
const BottomRow = styled.div`
  flex: none;
  height: 9px;
  display: flex;
`;

const ReturnRow = ({ name, letter, master }: { name: string; letter?: string; master?: boolean }) => (
  <Row $weight={1}>
    <Lane>{master && <GridNote>2/1</GridNote>}</Lane>
    <Header $c="#fff">
      <FoldIcon />
      <HeadText>{name}</HeadText>
    </Header>
    <Stack $w={38}>{master && <Pick value="1/2" label="main output" />}</Stack>
    <MixRow>
      <Stack $w={53}>
        {master ? (
          <Line>
            <Narrow $w={23}>
              <Field aria-label="main volume" defaultValue="-12.6" $fill={50} />
            </Narrow>
            <Narrow $w={23}>
              <Field aria-label="cue volume" defaultValue="-11.7" $fill={55} $c="#3a62b8" />
            </Narrow>
          </Line>
        ) : (
          <Line>
            <Activator $s="hot">{letter}</Activator>
            <Sq>S</Sq>
            <Ms>Post</Ms>
          </Line>
        )}
      </Stack>
      <Meter $live />
    </MixRow>
    <Stack $w={40}>
      <Line>
        <Narrow $w={24}>
          <Field aria-label="track delay" defaultValue="0.00" />
        </Narrow>
        <Ms>ms</Ms>
      </Line>
    </Stack>
  </Row>
);

const Arrangement = () => (
  <Arr>
    <Overview>
      <svg viewBox="0 0 1036 7" preserveAspectRatio="none">
        <path d="M20 4.500H240L300 3H560L700 5L1036 3" stroke="#6c6c66" strokeWidth="1" fill="none" />
        <path d="M250 2L420 5.500H700L860 3.500" stroke="#80807a" strokeWidth="0.8" fill="none" />
        <path d="M6 .5H548V6.500H6z" stroke="#b8b8b8" strokeWidth="1" fill="none" />
      </svg>
    </Overview>
    <RulerRow>
      <Ruler>
        {Array.from({ length: 35 }, (_, i) => 1 + i * 2).map((n) => (
          <Mark key={n} $at={n} $y={4} $tick={n > 1}>
            {n}
          </Mark>
        ))}
        <LoopBrace />
        <Mark $at={1.8} $y={15}>
          <Stroke w={4} h={6} d="M.5 .5v5M1 1.500l2.500 1.500L1 4.500" color="#ccc" />
          start
        </Mark>
        <Mark $at={33.7} $y={13}>
          .
        </Mark>
      </Ruler>
      <RightCol>
        <SetTools>
          <Group $gap={6}>
            <DarkButton $w={13}>Set</DarkButton>
            <Group $gap={2}>
              <DarkButton $w={12} aria-label="automation">
                <Stroke w={6} h={6} d="M1 5l4-4" />
              </DarkButton>
              <DarkButton $w={12} aria-label="lock">
                <Stroke w={4} h={4} d="M0 2.500h4" sw={3} />
              </DarkButton>
            </Group>
          </Group>
          <Group $gap={2}>
            <DarkButton $w={6} $round aria-label="previous">
              <Stroke w={4} h={4} d="M3 .5L1 2l2 1.500z" fill="#eee" />
            </DarkButton>
            <DarkButton $w={6} $round aria-label="next">
              <Tri size={3} dir="right" />
            </DarkButton>
          </Group>
        </SetTools>
      </RightCol>
    </RulerRow>
    <Tracks>
      {tracks.map((t, i) => (
        <TrackRow key={i} t={t} />
      ))}
      <Returns>
        <ReturnRow name="A Echo" letter="A" />
        <ReturnRow name="B Echo" letter="B" />
        <ReturnRow name="Main" master />
      </Returns>
      <Overlay>
        <VLine $at={1.8} $c="#8e8e8e" />
        <VLine $at={2.75} $c="#d8d8d8" />
        <Hand width="13" height="14" viewBox="0 0 13 14">
          <path
            d="M4 13L1 8.500C.5 7.500 1.800 7 2.500 7.800L3.500 9V3.200c0-1.200 1.600-1.200 1.700 0V2c0-1.300 1.700-1.300 1.800 0v1c.1-1.200 1.700-1.200 1.800 0v1.500c.1-1 1.700-1 1.700.2V10L9.500 13z"
            fill="#fff"
            stroke="#222"
            strokeWidth="0.9"
          />
          <path d="M5.200 3v4M7 3v4M8.800 4v3" stroke="#222" strokeWidth="0.6" />
        </Hand>
      </Overlay>
    </Tracks>
    <BottomRow>
      <Ruler>
        {["0:00", "0:10", "0:20", "0:30", "0:40", "0:50", "1:00", "1:10", "1:20", "1:30", "1:40"].map((s, i) => (
          <Mark key={s} $at={i ? 0.9 + i * 6.4 : 1} $y={1} $tick={i > 0}>
            {s}
          </Mark>
        ))}
      </Ruler>
      <RightCol>
        <Group $gap={2}>
          <Narrow $w={0} />
          <Chip $bg={ORANGE} $w={7} $h={6} aria-label="mixer">
            <Stroke w={5} h={4} d="M1 0v4M3.500 1v3" color="#2c1c08" />
          </Chip>
          <Narrow $w={16}>
            <Field aria-label="gain" defaultValue="0 dB" $fill={20} />
          </Narrow>
          <Narrow $w={49} />
          <Chip $bg={ORANGE} $w={7} $h={6} aria-label="height">
            <Stroke w={5} h={4} d="M1 0v4M4 0v4M1 2h3" color="#2c1c08" />
          </Chip>
          <DarkButton $w={7}>W</DarkButton>
        </Group>
      </RightCol>
    </BottomRow>
  </Arr>
);

/* ---------- devices ---------- */

const DeviceStrip = styled.section`
  flex: none;
  height: 101px;
  display: flex;
  gap: 1px;
  padding: 5px 0 2px 4px;
  overflow: hidden;
`;
const HelpBox = styled.div`
  flex: none;
  width: 116px;
  margin-right: 4px;
  background: #464646;
  h2 { margin: 0; height: 9px; padding-left: 3px; font-size: 5px; line-height: 9px; background: #5a5a5a; }
  p { margin: 0; padding: 1px 2px 1px 3px; line-height: 8px; white-space: nowrap; color: #d4d4d4; }
`;
const Device = styled.div<{ $w?: number }>`
  flex: ${(p) => (p.$w ? "none" : "1")};
  width: ${(p) => (p.$w ? p.$w + "px" : "auto")};
  min-width: 0;
  display: flex;
  flex-direction: column;
  overflow: hidden;
  background: #484848;
  border-radius: 2px;
  border: 1px solid #3c3c3c;
`;
const Title = styled.div<{ $c?: string }>`
  flex: none;
  height: 9px;
  display: flex;
  align-items: center;
  gap: 2px;
  padding: 0 1px;
  overflow: hidden;
  background: ${(p) => p.$c ?? "#5c5c5c"};
  color: ${(p) => (p.$c ? "#2a2416" : "#f0f0f0")};
`;
const Name = styled.span`
  flex: 1;
  min-width: 0;
`;
const DeviceBody = styled.div`
  flex: 1;
  min-height: 0;
  display: flex;
`;
const Dot = ({ on = true }: { on?: boolean }) => (
  <svg width="6" height="6" viewBox="0 0 6 6">
    <circle cx="3" cy="3" r="2.900" fill={on ? ORANGE : "#1e1e1e"} />
  </svg>
);
const Blob = ({ d, fill }: { d: string; fill?: boolean }) => (
  <svg width="6" height="6" viewBox="0 0 6 6">
    <circle cx="3" cy="3" r="3" fill="#1a1a1a" />
    <path d={d} stroke="#eee" strokeWidth="0.8" fill={fill ? "#eee" : "none"} />
  </svg>
);
const Fold = () => <Blob d="M1.800 2.200h2.400L3 4.200z" fill />;
const Wrench = () => <Blob d="M1.700 4.300l2.500-2.500" />;
const Swap = () => <Blob d="M1.700 3a1.300 1.300 0 0 1 2.500-.5M4.300 3.200a1.300 1.300 0 0 1-2.500.5" />;
const Save = () => <Blob d="M2 2h2v2H2z" fill />;
const More = () => <Blob d="M1.500 3h3" />;
const Tail = () => (
  <>
    <Swap />
    <Save />
    <More />
  </>
);

const Screen = styled.div`
  position: relative;
  height: 70px;
  background: #1d1d1d;
`;
const Ring = styled.span`
  position: absolute;
  left: 0;
  bottom: 0;
  width: 7px;
  height: 7px;
  border: 1px solid ${ORANGE};
  border-radius: 50%;
`;
const ScreenCol = styled.div`
  flex: none;
  width: 70px;
  margin: 3px 2px 0;
  display: flex;
  flex-direction: column;
  gap: 2px;
`;
const PluginScreen = () => (
  <ScreenCol>
    <Screen>
      <Ring />
    </Screen>
    <Line>
      <Pick value="none" label="parameter x" />
      <Pick value="none" label="parameter y" />
    </Line>
  </ScreenCol>
);
const Col = styled.div<{ $w?: number; $gap?: number; $center?: boolean; $dark?: boolean; $pad?: number }>`
  flex: ${(p) => (p.$w ? "none" : "1")};
  width: ${(p) => (p.$w ? p.$w + "px" : "auto")};
  padding: ${(p) => p.$pad ?? 2}px 2px 0;
  display: flex;
  flex-direction: column;
  gap: ${(p) => p.$gap ?? 2}px;
  align-items: ${(p) => (p.$center ? "center" : "stretch")};
  background: ${(p) => (p.$dark ? "#1c1c1c" : "transparent")};
`;
const KnobBox = styled.div`
  display: flex;
  flex-direction: column;
  align-items: center;
`;
const Knob = ({ top, val, v = 0, color = "#3fc4bd", size = 14, dim }: { top?: string; val: string; v?: number; color?: string; size?: number; dim?: boolean }) => {
  const ang = ((-135 + v * 270) * Math.PI) / 180;
  const px = 8 + 6 * Math.sin(ang);
  const py = 8 - 6 * Math.cos(ang);
  return (
    <KnobBox>
      {top}
      <svg width={size} height={size} viewBox="0 0 16 16" fill="none" strokeWidth="1.500">
        <path d="M3.800 12.200A6 6 0 1 1 12.200 12.200" stroke={dim ? "#6a6a6a" : "#1c1c1c"} />
        {!dim && v > 0 && <path d={`M3.800 12.200A6 6 0 ${v > 0.67 ? 1 : 0} 1 ${px} ${py}`} stroke={color} />}
        {!dim && <path d={`M8 8L${px} ${py}`} stroke="#1c1c1c" />}
      </svg>
      {val}
    </KnobBox>
  );
};
const Tag = styled.button<{ $c?: string; $dim?: boolean }>`
  flex: none;
  height: 6px;
  width: 100%;
  display: flex;
  align-items: center;
  justify-content: center;
  background: ${(p) => p.$c ?? (p.$dim ? "#2a2a2a" : "#1e1e1e")};
  color: ${(p) => (p.$c ? "#22303a" : p.$dim ? "#777" : "#e6e6e6")};
`;

const SlimBox = styled.div`
  flex: none;
  width: 10px;
  display: flex;
  flex-direction: column;
  align-items: center;
  gap: 2px;
  padding: 2px 0;
  background: #4b4b4b;
  border-radius: 2px;
`;
const VText = styled.span`
  writing-mode: vertical-rl;
  transform: rotate(180deg);
  line-height: 7px;
`;
const Slim = ({ name, wrench }: { name: string; wrench?: boolean }) => (
  <SlimBox>
    <Dot />
    <Spacer />
    <VText>{name}</VText>
    {wrench && <Wrench />}
    <Swap />
    <Save />
    <More />
  </SlimBox>
);
const RackDot = ({ on }: { on?: boolean }) => (
  <svg width="7" height="7" viewBox="0 0 7 7" fill={on ? ORANGE : "none"} stroke={on ? ORANGE : "#c8c8c8"} strokeWidth="0.8">
    <circle cx="3.500" cy="3.500" r="2.900" />
    <path d="M2 3.500h3" stroke={on ? "#2c1c08" : "#c8c8c8"} />
  </svg>
);

const SideControls = () => (
  <Col $w={42} $gap={1}>
    Sidechain
    <Pick value="No Input" label="sidechain input" />
    <Slot />
    <Narrow $w={1} />
    <KnobBox>
      <Knob top="Gain" val="0.00 dB" dim size={12} />
      <Knob top="Mix" val="100 %" dim size={12} />
    </KnobBox>
    <Narrow $w={1} />
    <Tag $dim>Mute</Tag>
  </Col>
);

const Bands = styled.div<{ $c: string }>`
  flex: 1;
  display: flex;
  flex-direction: column;
  gap: 2px;
  color: ${(p) => p.$c};
`;
const OttGraph = () => (
  <svg width="96" height="72" viewBox="0 0 98 72" fill="none">
    <path d="M0 .5H97M0 68.500H97" stroke="#484848" />
    {Array.from({ length: 14 }, (_, i) => (
      <path key={i} d={`M${i * 7 + 3} 1V68`} stroke="#272727" />
    ))}
    <rect x="0.500" y="2.500" width="34" height="18" fill="#15373a" stroke="#2d5557" />
    <rect x="0.500" y="25.500" width="46" height="18" fill="#15373a" stroke="#2d5557" />
    <path d="M20 3v17M24 3v17M28 3v17M31 3v17M34 26v17M38 26v17M42 26v17" stroke="#2d5557" strokeWidth="0.600" />
    <rect x="61.500" y="25.500" width="36" height="18" fill="#3a1f20" stroke="#6a4545" />
    <rect x="57.500" y="47.500" width="40" height="18" stroke="#4a4a4a" fill="#181c1c" />
    <text x="2" y="19" fill="#3fc4bd" fontSize="5">-35.1</text>
    <text x="2" y="42" fill="#3fc4bd" fontSize="5">-30.1</text>
  </svg>
);
const Axis = styled.div`
  display: flex;
  justify-content: space-between;
`;
const LIME = "#c8d84a";
const AQUA = "#3fc4ad";

const MiniCol = styled.div<{ $w: number }>`
  flex: none;
  width: ${(p) => p.$w}px;
  display: flex;
  flex-direction: column;
  gap: 2px;
`;
const BandBox = ({ name, hz, on }: { name: string; hz?: string; on?: boolean }) => (
  <Group $gap={2}>
    <MiniCol $w={23}>
      {on ? <Tag $c={ORANGE}>{name}</Tag> : <KnobBox>{name}</KnobBox>}
      {hz && <Field aria-label={name + " frequency"} defaultValue={hz} $fill={50} />}
    </MiniCol>
    <MiniCol $w={8}>
      <Tag $c={name === "Low" ? undefined : ORANGE} aria-label="band on">
        <Stroke w={5} h={5} d="M2.500 1a1.500 1.500 0 1 0 .1 0M2.500 0v2" color={name === "Low" ? "#eee" : "#2c1c08"} />
      </Tag>
      <Tag>S</Tag>
    </MiniCol>
  </Group>
);
const BandStack = styled.div`
  height: 68px;
  display: flex;
  flex-direction: column;
  justify-content: space-between;
`;
const Values = ({ head, rows, w }: { head: string; rows: [string, string][]; w: number }) => (
  <Col $w={w} $gap={3} $dark>
    {head}
    {rows.map(([a, b], i) => (
      <Bands key={i} $c={[LIME, AQUA, "#c8c8c8"][i]}>
        <span>{a}</span>
        <span>{b}</span>
      </Bands>
    ))}
    <br />
  </Col>
);

const Ott = () => (
  <Device $w={301}>
    <Title>
      <Dot />
      <Name>OTT</Name>
      <Tail />
    </Title>
    <DeviceBody>
      <SlimBox>
        <Tri />
        <RackDot />
        <Spacer />
        <VText>Sidechain</VText>
      </SlimBox>
      <Col $w={37} $center>
        Split Freq
        <BandStack>
          <BandBox name="High" hz="2.97 kHz" on />
          <BandBox name="Mid" />
          <BandBox name="Low" hz="88.3 Hz" on />
        </BandStack>
        <Tag>Soft Knee</Tag>
      </Col>
      <Col $w={22} $center>
        Input
        <BandStack>
          <Knob val="5.20 dB" v={0.6} />
          <Knob val="5.20 dB" v={0.6} />
          <Knob val="5.20 dB" dim />
        </BandStack>
        <Tag $c={ORANGE}>RMS</Tag>
      </Col>
      <Values w={27} head="Below" rows={[["-51.2 dB", "1 : 4.17"], ["-41.8 dB", "1 : 4.17"], ["-60.0 dB", "1 : 4.17"]]} />
      <Col $w={100} $dark $gap={1}>
        <OttGraph />
        <Axis>
          {[80, 70, 60, 50, 40, 30, 20, 10, 0].map((n) => (
            <span key={n}>{n}</span>
          ))}
        </Axis>
      </Col>
      <Values w={27} head="Above" rows={[["0.00 dB", "1 : Inf"], ["-30.2 dB", "1 : 66.7"], ["-33.8 dB", "1 : 66.7"]]} />
      <Values w={27} head="Att/Rel" rows={[["13.5 ms", "132 ms"], ["22.4 ms", "282 ms"], ["47.8 ms", "282 ms"]]} />
      <Col $w={24} $center>
        Output
        <BandStack>
          <Knob val="10.3 dB" v={0.7} />
          <Knob val="5.70 dB" v={0.6} />
          <Knob val="10.3 dB" dim />
        </BandStack>
      </Col>
      <Col $center $gap={2}>
        <Knob top="Output" val="0.00 dB" v={0.5} color="#1c1c1c" />
        <Knob top="Time" val="100 %" v={0.5} color="#1c1c1c" />
        <Knob top="Amount" val="54 %" v={0.54} />
      </Col>
    </DeviceBody>
  </Device>
);

const ParamLine = styled.div`
  flex: none;
  height: 10px;
  display: flex;
  align-items: center;
  gap: 4px;
  padding: 0 2px;
  border-top: 1px solid #3a3a3a;
  b { font-weight: 500; color: #4fb8b4; }
  i { font-style: normal; color: #d8b078; }
  ${Swatch} { margin: 0; }
`;
const Display = styled.div`
  flex: none;
  width: 104px;
  margin-top: 1px;
  display: flex;
  flex-direction: column;
  background: #1b1b1b;
`;

const VocalDelay = () => (
  <Device $w={201}>
    <Title>
      <Dot />
      <Name>Vocal Delay</Name>
      <Tail />
    </Title>
    <DeviceBody>
      <Col $w={64} $gap={5}>
        <Group $gap={8}>
          <Col $w={26} $center $pad={0}>
            Left
            <Tag $c="#3fbcc8">Time</Tag>
          </Col>
          <Col $w={26} $center $pad={0}>
            Right
            <Tag $c="#3fbcc8">Time</Tag>
          </Col>
        </Group>
        <Group $gap={5}>
          <Knob size={21} val="73.3 ms" v={0.45} />
          <Chip $bg={ORANGE} $w={7} $h={6} aria-label="link times">
            <Stroke w={5} h={4} d="M0 2h5" color="#2c1c08" />
          </Chip>
          <Knob size={21} val="73.3 ms" v={0.45} />
        </Group>
        <Group $gap={6}>
          <Narrow $w={10} />
          <Knob top="Feedback" val="8.3 %" v={0.08} />
          <Chip $bg="#1e1e1e" $w={7} $h={7}>
            *
          </Chip>
        </Group>
      </Col>
      <Display>
        <svg width="104" height="62" viewBox="0 0 104 62" fill="none">
          {[8, 16, 24, 32, 42, 50, 58, 66, 76, 84, 92].map((x) => (
            <path key={x} d={`M${x} 0V62`} stroke="#2c2c2c" strokeWidth="0.800" />
          ))}
          <path d="M0 21H104M0 42H104" stroke="#2c2c2c" strokeWidth="0.800" />
          <path d="M0 40C4 30 8 21 20 21H88C98 21 100 30 103 45" stroke="#44bdb4" strokeWidth="1.200" />
          <circle cx="52" cy="9" r="3" stroke={ORANGE} />
        </svg>
        <ParamLine>
          <Swatch $c="#3fc4bd" />
          Filter <span>Freq</span> <b>1.00 kHz</b> <span>Width</span> <b>8.00</b>
        </ParamLine>
        <ParamLine>
          <Tri dir="right" />
          LFO <span>Delay</span> <i>0.0 %</i> <Spacer />
          Filter <i>0.0 %</i>
          <Narrow $w={3} />
        </ParamLine>
      </Display>
      <Col $center>
        Smoothing
        <Tag $c={ORANGE}>Repitch</Tag>
        <Tag>Fade</Tag>
        <Tag>Jump</Tag>
        <Spacer />
        <Tag $c={ORANGE}>Ping Pong</Tag>
        <Knob top="Dry/Wet" val="17 %" v={0.17} />
      </Col>
    </DeviceBody>
  </Device>
);

const MacroName = styled.span`
  flex: none;
  width: 38px;
  height: 9px;
  padding-left: 2px;
  line-height: 9px;
  overflow: hidden;
  background: #fff;
  color: #444;
`;
const Macros = styled.div`
  padding-top: 6px;
  display: flex;
  flex-direction: column;
  gap: 1px;
`;
const MacroRow = styled(Group)<{ $on?: boolean }>`
  background: ${(p) => (p.$on ? "#6b6040" : "transparent")};
`;
const Purple = styled.span`
  flex: none;
  width: 4px;
  height: 4px;
  background: #5a48d8;
`;
const Rule = styled.hr`
  width: 34px;
  height: 1px;
  margin: 0 0 3px;
  border: 0;
  background: #1e1e1e;
`;

const Devices = () => (
  <DeviceStrip>
    <HelpBox>
      <h2>クリップ/デバイスドロップ範囲</h2>
      <p>
        このエリアにファイルやデバイスをドロップする
        <br />
        と新規トラックを作成できます。MIDIファイル
        <br />
        、MIDIエフェクト、インストゥルメントをドロ
        <br />
        ップすると新規MIDIトラックを作成します。サ
        <br />
        ンプルやオーディオエフェクトをドロップすると
        <br />
        、新規オーディオトラックを作成します。
      </p>
    </HelpBox>
    <SlimBox>
      <Dot />
      <RackDot />
      <RackDot />
      <RackDot on />
      <RackDot />
      <Spacer />
      <VText>Saku M...</VText>
      <Swap />
      <Save />
      <More />
    </SlimBox>
    <Device $w={165}>
      <Title>
        <Dot />
        <Fold />
        <Wrench />
        <Name>TBTECH Kirchhoff-EQ</Name>
        <DarkButton $w={27}>Configure</DarkButton>
        <Tail />
      </Title>
      <DeviceBody>
        <SideControls />
        <PluginScreen />
        <Col $center>
          Band5 Enabled
          <Pick value="Off" label="band 5" />
          <Narrow $w={1} />
          Band5 Freq.
          <Rule />
          0.78
        </Col>
      </DeviceBody>
    </Device>
    <Slim name="Compressor" />
    <Device $w={76}>
      <Title>
        <Dot on={false} />
        <Fold />
        <Wrench />
        <Name>UADx L...</Name>
        <Tail />
      </Title>
      <DeviceBody>
        <PluginScreen />
      </DeviceBody>
    </Device>
    <Ott />
    <Device $w={75}>
      <Title>
        <Dot />
        <Fold />
        <Wrench />
        <Name>T-De-Es...</Name>
        <Tail />
      </Title>
      <DeviceBody>
        <PluginScreen />
      </DeviceBody>
    </Device>
    <Device $w={75}>
      <Title $c="#857048">
        <Dot />
        <Fold />
        <Wrench />
        <Name>Strau...</Name>
        <Purple />
        <Tail />
      </Title>
      <DeviceBody>
        <PluginScreen />
      </DeviceBody>
    </Device>
    <Slim name="TBTECH Kirchhoff..." wrench />
    <Device $w={119}>
      <Title>
        <Dot />
        <Fold />
        <Wrench />
        <Name>Shadow Hills Class A Mast...</Name>
        <Tail />
      </Title>
      <DeviceBody>
        <SideControls />
        <PluginScreen />
      </DeviceBody>
    </Device>
    <VocalDelay />
    <Slim name="saku room2" />
    <Device>
      <Title>
        <Dot />
        <Name>sidechain RAUM</Name>
      </Title>
      <DeviceBody>
        <Col $w={12} $center>
          <RackDot />
          <RackDot />
          <RackDot on />
          <RackDot on />
        </Col>
        <Col $gap={1} $pad={4}>
          <DarkButton $w={8} aria-label="map">
            <Stroke w={6} h={6} d="M1 3h4M3.500 1.500L5 3 3.500 4.500" color="#eee" />
          </DarkButton>
          <Macros>
            {[
              ["Raum | Utility", "-1.5 dB"],
              ["Envelope Fol...", "0.0 dB"],
            ].map(([a, b], i) => (
              <MacroRow key={a} $gap={4} $on={i === 0}>
                <MacroName>{a}</MacroName>
                <Narrow $w={20}>
                  <Field aria-label={a} defaultValue={b} $fill={90} />
                </Narrow>
                <Narrow $w={6}>
                  <Tag>C</Tag>
                </Narrow>
              </MacroRow>
            ))}
          </Macros>
          <Hint>
            オーディオエフェクトを
            <br />
            ロップ
          </Hint>
        </Col>
      </DeviceBody>
    </Device>
  </DeviceStrip>
);

/* ---------- status ---------- */

const Status = styled.footer`
  flex: none;
  height: 17px;
  display: flex;
  align-items: center;
  gap: 3px;
  padding: 0 24px 1px 5px;
  background: #333;
  border-top: 2px solid #2c2c2c;
`;
const Message = styled.div`
  height: 9px;
  flex: 1;
  margin: 0 36px 0 4px;
  padding-left: 2px;
  line-height: 9px;
  background: #3b3b3b;
`;
const Scrub = styled.div`
  width: 92px;
  height: 1px;
  margin: 0 2px 0 10px;
  background: #222;
`;
const Mini = styled.div`
  width: 52px;
  height: 11px;
  border: 1px solid #ccc;
  border-radius: 2px;
  background: repeating-linear-gradient(90deg, #1a1a1a 0 6px, #3c3c3c 6px 7px);
`;
const Faded = styled.span`
  margin-left: 14px;
  color: #a0a0a0;
`;

const StatusBar = () => (
  <Status>
    <svg width="9" height="9" viewBox="0 0 9 9">
      <circle cx="4.500" cy="4.500" r="4" fill={ORANGE} />
      <path d="M4.500 2v1M4.500 4v3" stroke="#2c1c08" strokeWidth="1.200" />
    </svg>
    <Message>
      label_001_main&nbsp; スタート: 2.1.1&nbsp; エンド: 34.1.1&nbsp; 長さ: 32.0.0&nbsp; /Volumes/Saku SSD4/Ableton in SSD/Project/20250807 pure Project/miku/label_001_main.wav | 96.0 kHz | 24 Bit | 1 Ch
    </Message>
    <Tri dir="right" />
    <Scrub />
    <Chip $bg={ORANGE} $w={10} aria-label="track view">
      <Stroke w={4} h={4} d="M0 3.500L2 .5 4 3.500z" fill="#2c1c08" color="none" />
    </Chip>
    <span>5-label_001_main</span>
    <Mini />
    <Faded>n-1 breakc</Faded>
  </Status>
);

export default function App() {
  return (
    <Shell>
      <Global />
      <Top />
      <Middle>
        <LeftCol>
          <Browser />
          <Groove />
        </LeftCol>
        <Arrangement />
      </Middle>
      <Devices />
      <StatusBar />
    </Shell>
  );
}
